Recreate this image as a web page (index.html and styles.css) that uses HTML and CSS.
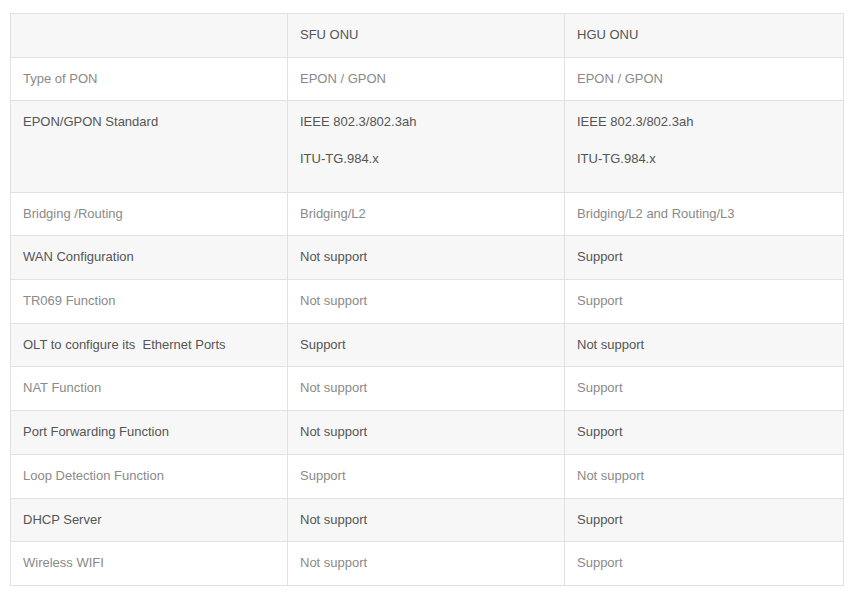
FILE: index.html
```html
<!DOCTYPE html>
<html>
<head>
<meta charset="utf-8">
<link rel="stylesheet" href="styles.css">
</head>
<body>
<div class="wrap">
<table class="spec">
<colgroup><col class="c1"><col class="c2"><col class="c3"></colgroup>
<tr class="shade"><td></td><td>SFU ONU</td><td>HGU ONU</td></tr>
<tr><td>Type of PON</td><td>EPON / GPON</td><td>EPON / GPON</td></tr>
<tr class="shade tall"><td>EPON/GPON Standard</td><td><p>IEEE 802.3/802.3ah</p><p>ITU-TG.984.x</p></td><td><p>IEEE 802.3/802.3ah</p><p>ITU-TG.984.x</p></td></tr>
<tr><td>Bridging /Routing</td><td>Bridging/L2</td><td>Bridging/L2 and Routing/L3</td></tr>
<tr class="shade"><td>WAN Configuration</td><td>Not support</td><td>Support</td></tr>
<tr><td>TR069 Function</td><td>Not support</td><td>Support</td></tr>
<tr class="shade"><td>OLT to configure its&nbsp; Ethernet Ports</td><td>Support</td><td>Not support</td></tr>
<tr><td>NAT Function</td><td>Not support</td><td>Support</td></tr>
<tr class="shade"><td>Port Forwarding Function</td><td>Not support</td><td>Support</td></tr>
<tr><td>Loop Detection Function</td><td>Support</td><td>Not support</td></tr>
<tr class="shade"><td>DHCP Server</td><td>Not support</td><td>Support</td></tr>
<tr><td>Wireless WIFI</td><td>Not support</td><td>Support</td></tr>
</table>
</div>
</body>
</html>
```
FILE: styles.css
```css
html, body {
  margin: 0;
  padding: 0;
  background: #fff;
}
.wrap {
  padding: 13px 12px 0 10px;
}
.spec {
  width: 833px;
  border-collapse: collapse;
  table-layout: fixed;
  font-family: "Liberation Sans", Arial, sans-serif;
  font-size: 13px;
  line-height: 18.73px;
  color: #8a8a8a;
}
.spec .c1 { width: 277px; }
.spec .c2 { width: 277px; }
.spec .c3 { width: 279px; }
.spec td {
  border: 1px solid #e1e1e1;
  padding: 12px 12px;
  vertical-align: top;
  text-align: left;
}
.spec .shade td {
  background: #f7f7f7;
  color: #555;
}
.spec p {
  margin: 0 0 17.3px 0;
}
.spec p:last-child {
  margin-bottom: 11.3px;
}
```
